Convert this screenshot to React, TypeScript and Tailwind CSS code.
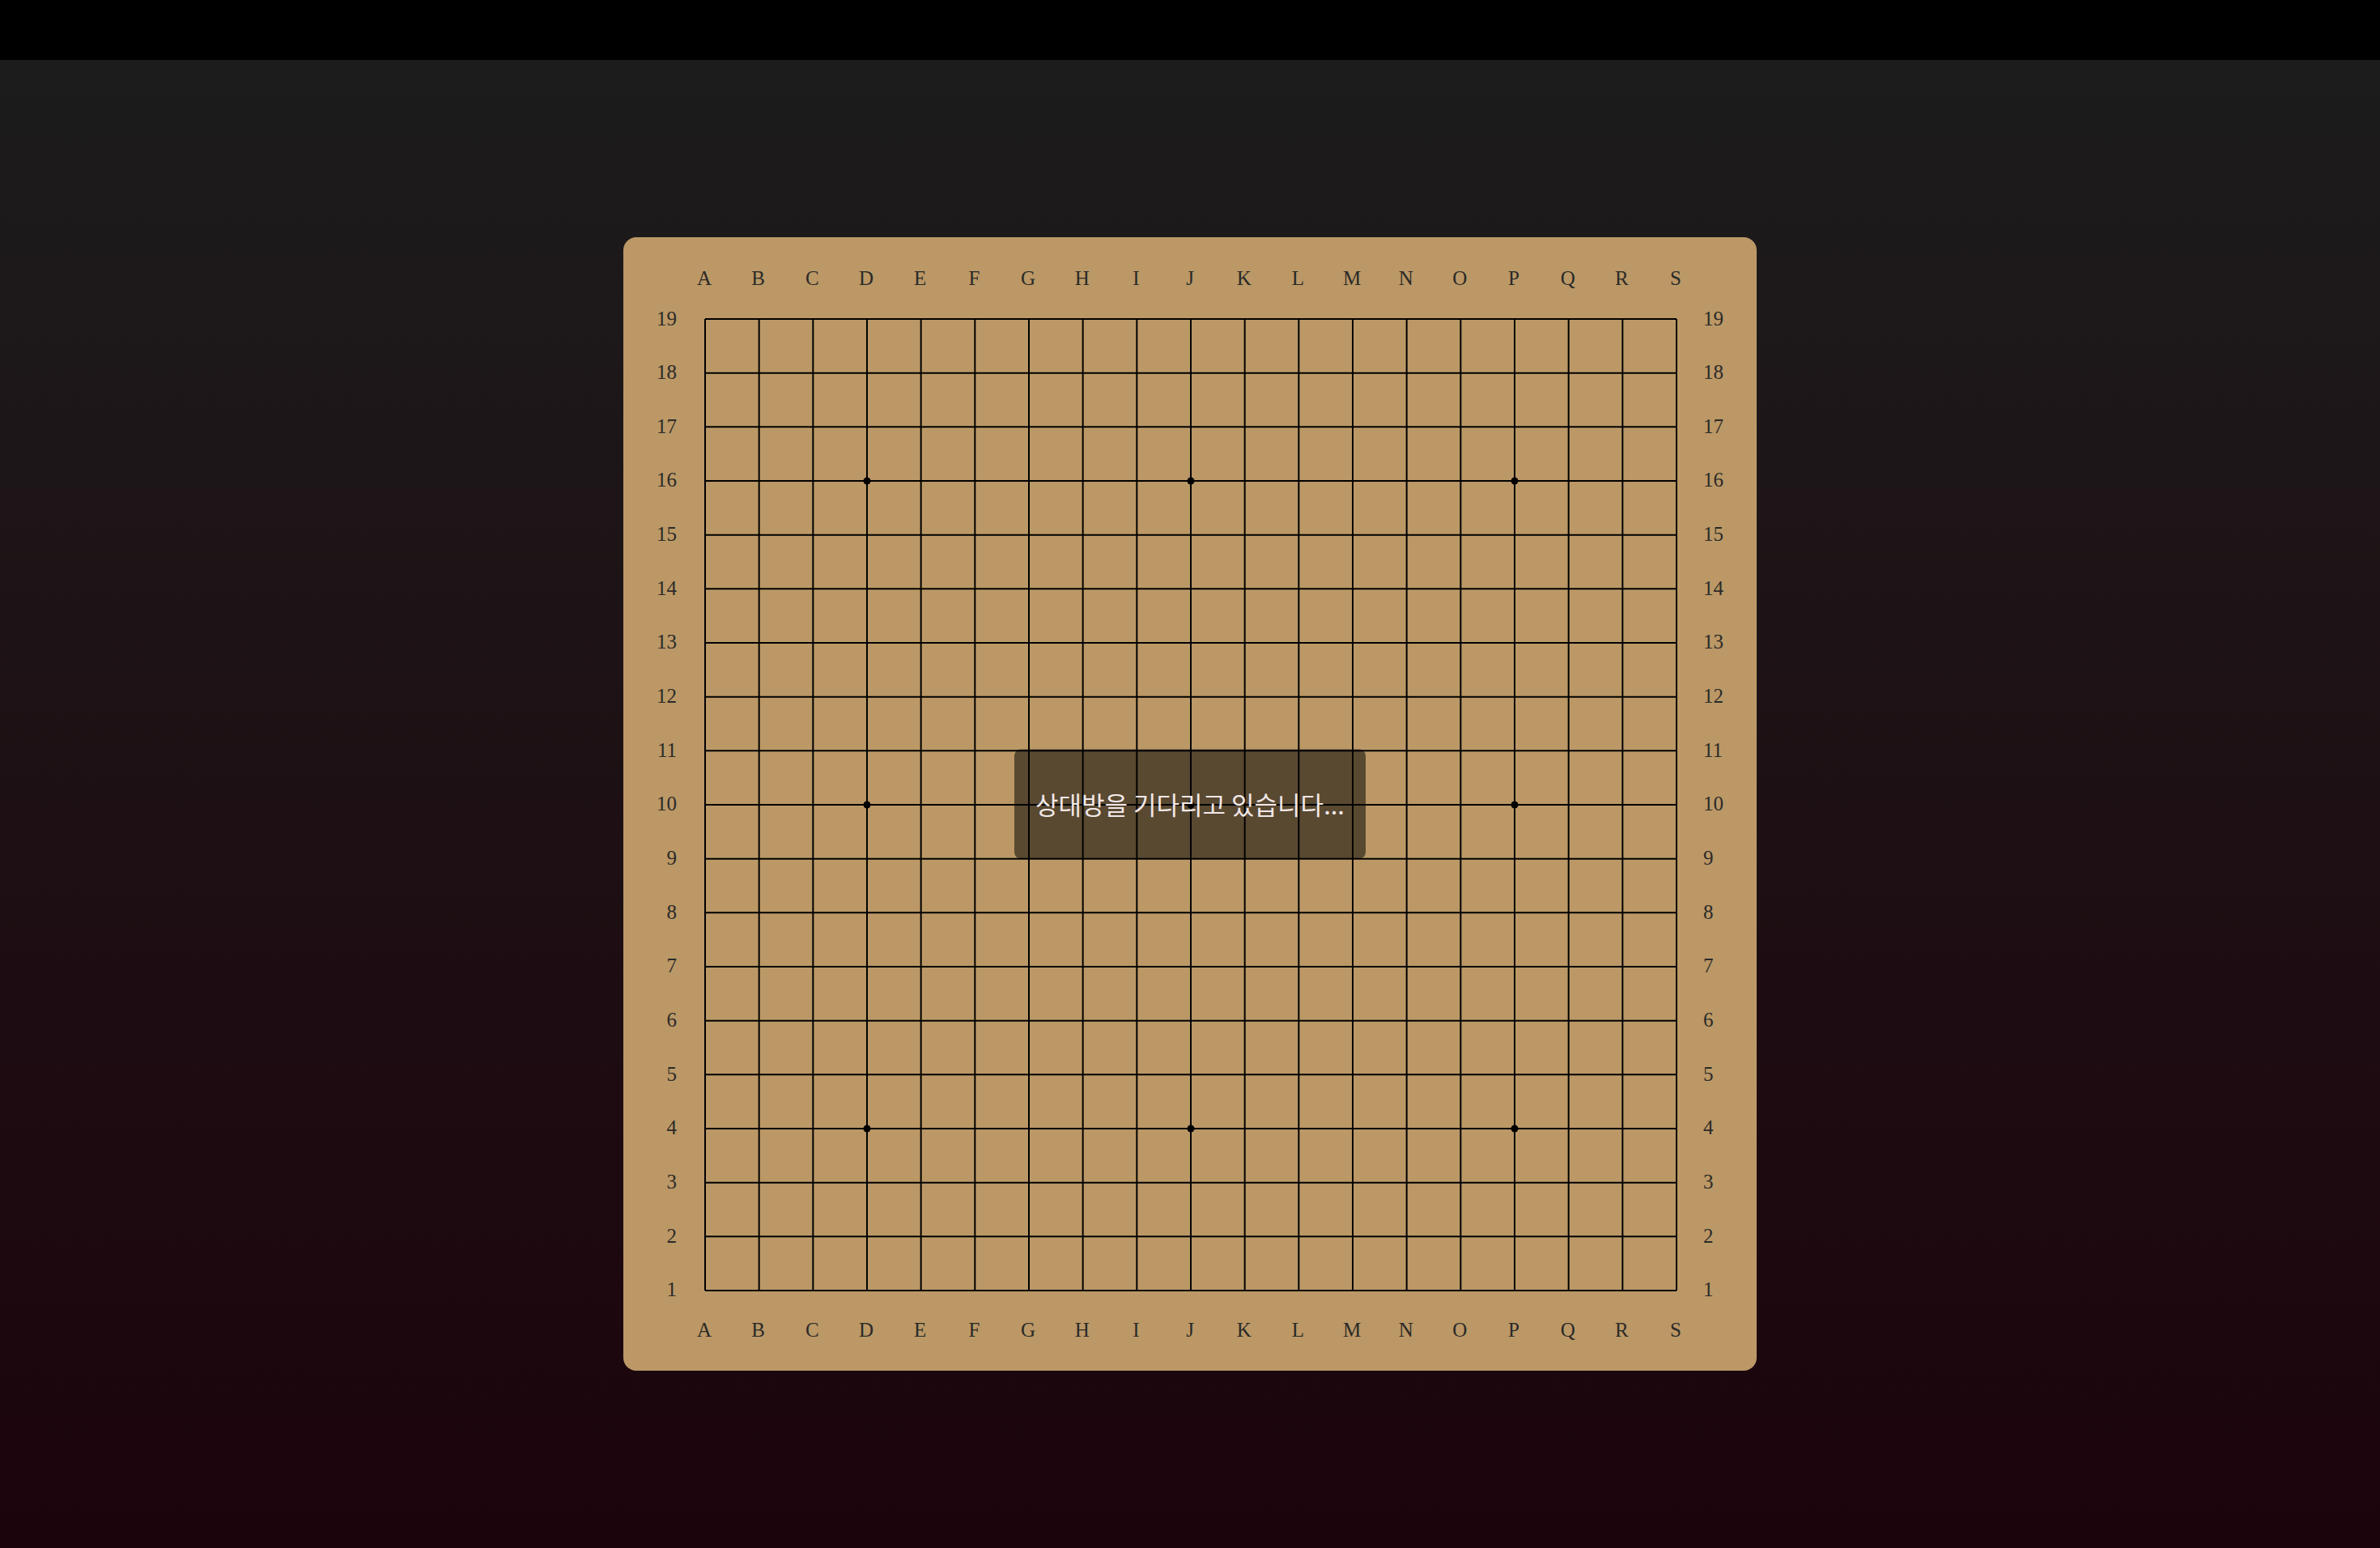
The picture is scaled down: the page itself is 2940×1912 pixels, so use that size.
import React from "react";

const LETTERS = "ABCDEFGHIJKLMNOPQRS".split("");
const NUMBERS = Array.from({ length: 19 }, (_, i) => 19 - i);
const STEP = 1200 / 18;
const STARS = [3, 9, 15];

const ColumnLabels: React.FC<{ bottom?: boolean }> = ({ bottom }) => (
  <div className={`flex h-full ${bottom ? "items-start pt-[37px]" : "items-end pb-[37px]"}`}>
    <div className="-mx-[33.333px] grid w-[1266.667px] grid-cols-[repeat(19,minmax(0,1fr))]">
      {LETTERS.map((l) => (
        <span key={l} className="text-center text-[25px] leading-none">
          {l}
        </span>
      ))}
    </div>
  </div>
);

const RowLabels: React.FC<{ right?: boolean }> = ({ right }) => (
  <div className={`-my-[33.333px] grid h-[1266.667px] grid-rows-[repeat(19,minmax(0,1fr))] ${right ? "pl-[34px]" : "pr-[34px]"}`}>
    {NUMBERS.map((n) => (
      <span key={n} className={`flex items-center text-[25px] leading-none ${right ? "justify-start" : "justify-end"}`}>
        {n}
      </span>
    ))}
  </div>
);

const Grid: React.FC = () => (
  <svg width={1200} height={1200} viewBox="0 0 1200 1200" className="block overflow-visible">
    {Array.from({ length: 19 }, (_, i) => {
      const p = i * STEP + 1;
      return (
        <g key={i}>
          <line x1={p} y1={1} x2={p} y2={1201} stroke="#000" strokeWidth={2} />
          <line x1={1} y1={p} x2={1201} y2={p} stroke="#000" strokeWidth={2} />
        </g>
      );
    })}
    {STARS.map((x) =>
      STARS.map((y) => <circle key={`${x}-${y}`} cx={x * STEP + 1} cy={y * STEP + 1} r={4.5} fill="#000" />)
    )}
  </svg>
);

export default function App() {
  return (
    <div className="flex h-screen flex-col font-['Liberation_Serif',serif]">
      <div className="h-[74px] shrink-0 bg-black" />
      <main className="flex flex-1 items-center justify-center bg-linear-to-b from-[#1c1c1c] to-[#1c040c]">
        <div className="grid h-[1400px] w-[1400px] grid-cols-[100px_1200px_100px] grid-rows-[100px_1200px_100px] rounded-2xl bg-[#bb9866] text-[#2b2a28]">
          <div />
          <ColumnLabels />
          <div />

          <RowLabels />
          <div className="relative">
            <Grid />
            <div className="absolute left-1/2 top-1/2 flex h-[135px] w-[434px] -translate-x-1/2 -translate-y-1/2 items-center justify-center rounded-lg bg-[rgba(0,0,0,0.52)]">
              <span className="font-['Noto_Sans_CJK_KR',sans-serif] text-[31px] text-[#f2e8e8]">상대방을 기다리고 있습니다...</span>
            </div>
          </div>
          <RowLabels right />

          <div />
          <ColumnLabels bottom />
          <div />
        </div>
      </main>
    </div>
  );
}
